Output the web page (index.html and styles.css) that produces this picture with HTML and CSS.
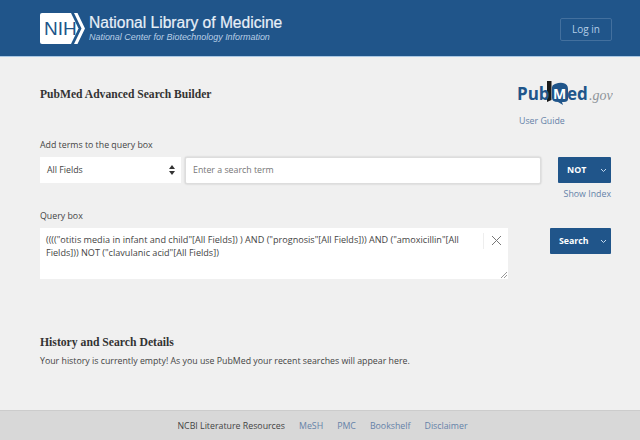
FILE: index.html
```html
<!DOCTYPE html>
<html lang="en">

<head>
    <meta charset="UTF-8">
    <meta name="viewport" content="width=device-width, initial-scale=1.0">
    <title>PubMed Advanced Search Builder</title>
    <link rel="stylesheet" href="styles.css">
</head>

<body>
    <header class="top-bar">
        <div class="brand">
            <svg class="nih-logo" width="45" height="31" viewBox="0 0 45 31">
                <path d="M2 0H31L38.500 15.500L31 31H2Q0 31 0 29V2Q0 0 2 0Z" fill="#fff" />
                <path d="M34 0H37.500L45 15.500L37.500 31H34L41.500 15.500Z" fill="#fff" />
                <text x="4" y="22" class="nih-text">NIH</text>
            </svg>
            <div class="brand-text">
                <div class="brand-name">National Library of Medicine</div>
                <div class="brand-sub">National Center for Biotechnology Information</div>
            </div>
        </div>
        <a class="login">Log in</a>
    </header>

    <main class="content">
        <div class="title-row">
            <h1>PubMed Advanced Search Builder</h1>
            <div class="pubmed-side">
                <svg class="pubmed-logo" width="96" height="30" viewBox="0 0 96 30">
                    <path d="M35 10Q35 8 38 7Q43 5 46 6Q51 7 51 12V22Q51 25 47 25L45 25L46 28L41 25Q35 25 35 21Z" fill="#20558a" />
                    <path d="M30 4H34.500V23L30 25Z" fill="#1a1a1a" />
                    <text x="0" y="23" class="pm-blue">Pub</text>
                    <text x="36" y="22" class="pm-white">M</text>
                    <text x="50" y="23" class="pm-blue">ed</text>
                    <text x="72" y="23" class="pm-gov">.gov</text>
                </svg>
                <a class="guide">User Guide</a>
            </div>
        </div>

        <label class="field-label">Add terms to the query box</label>
        <div class="term-row">
            <div class="select-box">
                <span>All Fields</span>
                <svg width="6" height="10" viewBox="0 0 6 10">
                    <path d="M3 0L6 4H0Z M3 10L0 6H6Z" fill="#333" />
                </svg>
            </div>
            <div class="term-input">Enter a search term</div>
            <div class="op-col">
                <button class="blue-btn not-btn">NOT<svg class="chev" width="7" height="5" viewBox="0 0 7 5"><path d="M1 1L3.500 3.500L6 1" /></svg></button>
                <a class="show-index">Show Index</a>
            </div>
        </div>

        <label class="field-label">Query box</label>
        <div class="query-row">
            <div class="query-box">
                <div class="query-text">(((("otitis media in infant and child"[All Fields]) ) AND ("prognosis"[All Fields])) AND ("amoxicillin"[All Fields])) NOT ("clavulanic acid"[All Fields])</div>
                <div class="clear-col">
                    <svg width="11" height="11" viewBox="0 0 11 11">
                        <path d="M1 1L10 10M10 1L1 10" stroke="#777" stroke-width="1" fill="none" />
                    </svg>
                </div>
                <svg class="grip" width="6" height="6" viewBox="0 0 6 6">
                    <path d="M0 6L6 0M3 6L6 3" stroke="#999" stroke-width="1" fill="none" />
                </svg>
            </div>
            <button class="blue-btn search-btn">Search<svg class="chev" width="7" height="5" viewBox="0 0 7 5"><path d="M1 1L3.500 3.500L6 1" /></svg></button>
        </div>

        <h2>History and Search Details</h2>
        <p class="history-note">Your history is currently empty! As you use PubMed your recent searches will appear here.</p>
    </main>

    <footer class="bottom-bar">
        <span>NCBI Literature Resources</span>
        <a>MeSH</a>
        <a>PMC</a>
        <a>Bookshelf</a>
        <a>Disclaimer</a>
    </footer>
</body>

</html>
```

FILE: styles.css
```css
* {
    box-sizing: border-box;
}

body {
    font-family: "Open Sans", sans-serif;
    font-size: 8.800px;
    color: #444;
    margin: 0;
    height: 440px;
    overflow: hidden;
    background: #f0f0f0;
    display: flex;
    flex-direction: column;
}

a {
    color: #6582a8;
}

.top-bar {
    height: 57px;
    background: #20558a;
    border-bottom: 1px solid #a9c8e4;
    padding: 13px 28px 0 40px;
    display: flex;
    justify-content: space-between;
    align-items: flex-start;
}

.brand {
    display: flex;
    gap: 4px;
}

.nih-logo {
    display: block;
}

.nih-text {
    font-family: "Liberation Sans", sans-serif;
    font-size: 19px;
    fill: #20558a;
}

.brand-text {
    padding-top: 1px;
}

.brand-name {
    font-family: "Liberation Sans", sans-serif;
    font-size: 15.600px;
    line-height: 18px;
    color: #e8f0f8;
    -webkit-text-stroke: 0.2px #e8f0f8;
}

.brand-sub {
    font-family: "Liberation Sans", sans-serif;
    font-size: 8.950px;
    font-style: italic;
    line-height: 11px;
    color: #b9cfe6;
}

.login {
    width: 52px;
    height: 23px;
    margin-top: 5px;
    border: 1px solid #43709e;
    border-radius: 2px;
    color: #b4cee8;
    font-size: 10px;
    line-height: 21px;
    text-align: center;
}

.content {
    flex: 1;
    padding: 0 29px 0 40px;
}

.title-row {
    height: 82px;
    display: flex;
    justify-content: space-between;
    align-items: flex-start;
}

h1 {
    font-family: "Liberation Serif", serif;
    font-size: 11.600px;
    font-weight: bold;
    color: #333;
    margin: 31px 0 0;
}

.pubmed-side {
    padding-top: 20px;
    width: 94px;
}

.pubmed-logo {
    display: block;
}

.pm-blue,
.pm-white {
    font-family: "Open Sans", sans-serif;
    font-size: 17px;
    font-weight: bold;
}

.pm-blue {
    fill: #20558a;
}

.pm-white {
    fill: #fff;
    font-size: 14px;
}

.pm-gov {
    font-family: "Liberation Serif", serif;
    font-size: 14px;
    font-style: italic;
    fill: #8f949a;
}

.guide {
    display: block;
    margin: 8px 0 0 2px;
}

.field-label {
    display: block;
    line-height: 12px;
}

.term-row {
    margin-top: 6px;
    height: 53px;
    display: flex;
    align-items: flex-start;
}

.select-box {
    width: 141px;
    height: 26px;
    background: #fff;
    padding: 0 6px 0 7px;
    display: flex;
    justify-content: space-between;
    align-items: center;
}

.term-input {
    width: 356px;
    height: 27px;
    margin-left: 4px;
    background: #fff;
    border: 1px solid #ddd;
    border-radius: 2px;
    box-shadow: 0 0 2px #bbb;
    padding-left: 7px;
    line-height: 25px;
    color: #777;
}

.op-col {
    margin-left: 17px;
    width: 53px;
}

.blue-btn {
    height: 26px;
    border: none;
    border-radius: 1px;
    background: #20558a;
    color: #fff;
    font-family: "Open Sans", sans-serif;
    font-size: 8.800px;
    font-weight: bold;
    display: flex;
    align-items: center;
    justify-content: space-between;
}

.chev {
    fill: none;
    stroke: #c4d9ee;
    stroke-width: 1;
}

.not-btn {
    width: 53px;
    padding: 0 4px 0 9px;
}

.show-index {
    display: block;
    margin-top: 5px;
    text-align: right;
    white-space: nowrap;
}

.query-row {
    margin-top: 6px;
    height: 108px;
    display: flex;
    align-items: flex-start;
}

.query-box {
    width: 468px;
    height: 51px;
    background: #fff;
    position: relative;
    display: flex;
}

.query-text {
    width: 443px;
    padding: 5px 6px;
    line-height: 13px;
    font-size: 9.100px;
}

.clear-col {
    flex: 1;
    height: 16px;
    margin-top: 5px;
    padding: 2px 0 0 7px;
    border-left: 1px solid #eee;
}

.grip {
    position: absolute;
    right: 1px;
    bottom: 1px;
}

.search-btn {
    width: 61px;
    margin-left: 42px;
    padding: 0 4px 0 9px;
}

h2 {
    font-family: "Liberation Serif", serif;
    font-size: 11.700px;
    font-weight: bold;
    color: #333;
    margin: 0;
    line-height: 14px;
}

.history-note {
    margin: 5px 0 0;
    line-height: 12px;
}

.bottom-bar {
    height: 30px;
    padding-left: 5px;
    background: #d8d8d8;
    border-top: 1px solid #ccc;
    display: flex;
    justify-content: center;
    align-items: center;
    gap: 14px;
}
```
